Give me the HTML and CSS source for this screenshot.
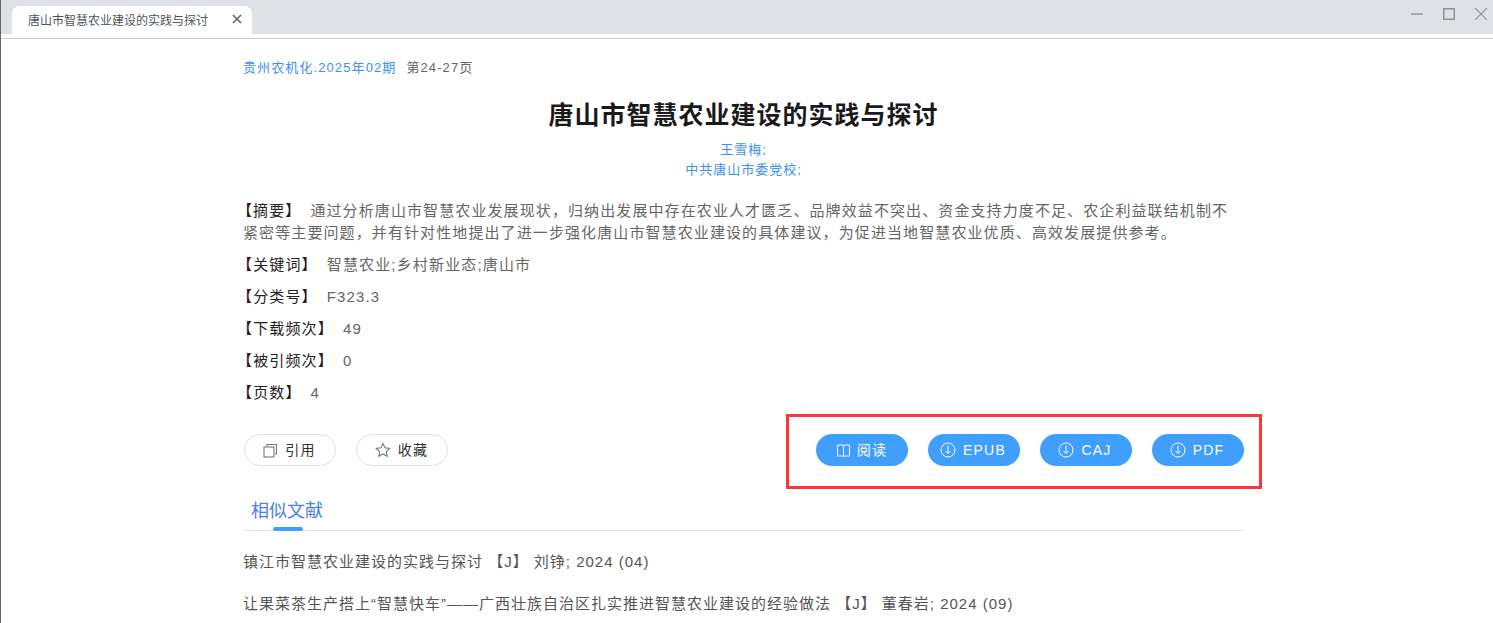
FILE: index.html
```html
<!DOCTYPE html>
<html lang="zh-CN">
<head>
<meta charset="utf-8">
<title>唐山市智慧农业建设的实践与探讨</title>
<link rel="stylesheet" href="styles.css">
</head>
<body>
<div class="window">
  <header class="tabstrip">
    <div class="tab">
      <span class="tab-title">唐山市智慧农业建设的实践与探讨</span>
      <svg class="tab-close" width="10" height="10" viewBox="0 0 10 10"><path d="M1 1l8 8M9 1l-8 8" stroke="#5f6368" stroke-width="1.6" fill="none"/></svg>
    </div>
    <div class="win-controls">
      <svg width="12" height="12" viewBox="0 0 12 12"><path d="M0 6h12" stroke="#9b9ea3" stroke-width="1.6"/></svg>
      <svg width="12" height="12" viewBox="0 0 12 12"><rect x=".75" y=".75" width="10.5" height="10.5" fill="none" stroke="#8f9296" stroke-width="1.5"/></svg>
      <svg width="12" height="12" viewBox="0 0 12 12"><path d="M0 0l12 12M12 0L0 12" stroke="#8f9296" stroke-width="1.2" fill="none"/></svg>
    </div>
  </header>
  <div class="tab-gap"></div>
  <main class="page">
    <p class="source"><a class="link">贵州农机化.2025年02期</a><span class="pages">第24-27页</span></p>
    <h1 class="title">唐山市智慧农业建设的实践与探讨</h1>
    <p class="author">王雪梅;</p>
    <p class="org">中共唐山市委党校;</p>
    <p class="abstract"><b class="label">【摘要】</b><span>通过分析唐山市智慧农业发展现状，归纳出发展中存在农业人才匮乏、品牌效益不突出、资金支持力度不足、农企利益联结机制不</span><span class="abstract-rest">紧密等主要问题，并有针对性地提出了进一步强化唐山市智慧农业建设的具体建议，为促进当地智慧农业优质、高效发展提供参考。</span></p>
    <p class="meta"><b class="label">【关键词】</b>智慧农业;乡村新业态;唐山市</p>
    <p class="meta"><b class="label">【分类号】</b>F323.3</p>
    <p class="meta"><b class="label">【下载频次】</b>49</p>
    <p class="meta"><b class="label">【被引频次】</b>0</p>
    <p class="meta"><b class="label">【页数】</b>4</p>
    <div class="actions">
      <div class="actions-left">
        <button class="btn btn-plain">
          <svg width="15" height="15" viewBox="0 0 15 15" fill="none" stroke="#777" stroke-width="1.1"><rect x="1" y="4" width="10" height="10"/><path d="M4 3V1.500h9.500V11H12"/></svg>
          <span class="btn-text">引用</span>
        </button>
        <button class="btn btn-plain">
          <svg width="16" height="16" viewBox="0 0 16 16" fill="none" stroke="#777" stroke-width="1.100"><path d="M8 1.500l2 4.300 4.700.6-3.400 3.200.9 4.700L8 12l-4.200 2.300.9-4.700L1.300 6.400 6 5.800z"/></svg>
          <span class="btn-text">收藏</span>
        </button>
      </div>
      <div class="actions-right">
        <button class="btn btn-primary btn-read">
          <svg width="13" height="13" viewBox="0 0 13 13" fill="none" stroke="#fff" stroke-width="1"><path d="M.5 1h5.500l.5.500.5-.5h5.500v11H7l-.5.500L6 12H.5zM6.500 1.500V12"/></svg>
          <span class="btn-text">阅读</span>
        </button>
        <button class="btn btn-primary btn-file">
          <svg width="16" height="16" viewBox="0 0 16 16" fill="none" stroke="#fff" stroke-width="1"><circle cx="8" cy="8" r="7"/><path d="M8 3.500v8M5.500 9L8 11.500 10.500 9"/></svg>
          <span>EPUB</span>
        </button>
        <button class="btn btn-primary btn-file">
          <svg width="16" height="16" viewBox="0 0 16 16" fill="none" stroke="#fff" stroke-width="1"><circle cx="8" cy="8" r="7"/><path d="M8 3.500v8M5.500 9L8 11.500 10.500 9"/></svg>
          <span>CAJ</span>
        </button>
        <button class="btn btn-primary btn-file">
          <svg width="16" height="16" viewBox="0 0 16 16" fill="none" stroke="#fff" stroke-width="1"><circle cx="8" cy="8" r="7"/><path d="M8 3.500v8M5.500 9L8 11.500 10.500 9"/></svg>
          <span>PDF</span>
        </button>
      </div>
      <div class="annotation"></div>
    </div>
    <div class="similar-head"><span class="similar-tab">相似文献</span></div>
    <p class="ref">镇江市智慧农业建设的实践与探讨 【J】 刘铮; 2024 (04)</p>
    <p class="ref">让果菜茶生产搭上“智慧快车”——广西壮族自治区扎实推进智慧农业建设的经验做法 【J】 董春岩; 2024 (09)</p>
  </main>
</div>
</body>
</html>
```
FILE: styles.css
```css
* { box-sizing: border-box; }
html, body { margin: 0; height: 100%; overflow: hidden; background: #fff; }
body { font-family: "Liberation Sans", "Noto Sans CJK SC", sans-serif; color: #666; }
.window { height: 623px; overflow: hidden; border-left: 1px solid #666; }
.tabstrip { height: 34px; background: #dee1e6; display: flex; justify-content: space-between; align-items: flex-end; }
.tab { margin-left: 11px; width: 240px; height: 28px; background: #fff; border-radius: 8px 8px 0 0; display: flex; align-items: center; justify-content: space-between; padding: 0 10px 2px 16px; }
.tab-title { font-size: 12px; color: #50545a; white-space: nowrap; }
.win-controls { align-self: center; display: flex; align-items: center; gap: 20px; margin: 0 6px 7px 0; }
.win-controls svg { display: block; }
.tab-gap { height: 5px; border-bottom: 1px solid #cdcdcd; }
.page { width: 1001px; margin-left: 242px; }
p { margin: 0; }
.source { font-size: 13px; letter-spacing: 1.1px; line-height: 20px; margin-top: 19px; display: flex; gap: 10px; }
.link { color: #3d8ef8; }
.pages { color: #666; }
.title { margin: 19px 0 0; font-size: 25px; line-height: 36px; letter-spacing: 1px; font-weight: 700; color: #1a1a1a; text-align: center; }
.author, .org { font-size: 13px; line-height: 20px; letter-spacing: 1px; text-align: center; color: #3d8ef8; }
.author { margin-top: 7px; }
.abstract { margin-top: 20px; font-size: 15px; line-height: 22px; letter-spacing: 1.1px; white-space: nowrap; }
.abstract-rest { display: block; }
.meta { margin-top: 10px; font-size: 15px; line-height: 22px; letter-spacing: 1.15px; }
.label { font-weight: 400; color: #222; margin-left: -6px; margin-right: 9px; }
.actions { position: relative; margin-top: 30px; display: flex; justify-content: space-between; align-items: center; }
.actions-left, .actions-right { display: flex; }
.actions-left { gap: 20px; margin-left: 1px; }
.actions-right { gap: 20px; }
.btn { width: 92px; height: 32px; border-radius: 16px; display: flex; align-items: center; justify-content: center; gap: 6px; padding: 0; font: inherit; font-size: 14px; letter-spacing: 1.2px; cursor: pointer; }
.btn-text { position: relative; top: -1px; }
.btn-plain { background: #fff; border: 1px solid #e2e2e2; color: #333; gap: 7px; padding-right: 1px; }
.btn-primary { background: #409eff; border: 0; color: #fff; }
.btn-read { gap: 7px; }
.btn-file { gap: 7px; padding-right: 2px; }
.annotation { position: absolute; left: 543px; top: -20px; width: 476px; height: 75px; border: 3px solid #f83838; pointer-events: none; }
.similar-head { margin-top: 28px; height: 37px; border-bottom: 1px solid #e6e6e6; padding-left: 7px; margin-left: 1px; }
.similar-tab { display: inline-block; position: relative; font-size: 18px; line-height: 26px; color: #4a80e8; height: 37px; padding-top: 4px; }
.similar-tab::after { content: ""; position: absolute; left: 22px; bottom: 0; width: 30px; height: 4px; border-radius: 2px; background: #409eff; }
.ref { font-size: 15px; line-height: 22px; color: #555; letter-spacing: 1px; margin-top: 20px; }
```
